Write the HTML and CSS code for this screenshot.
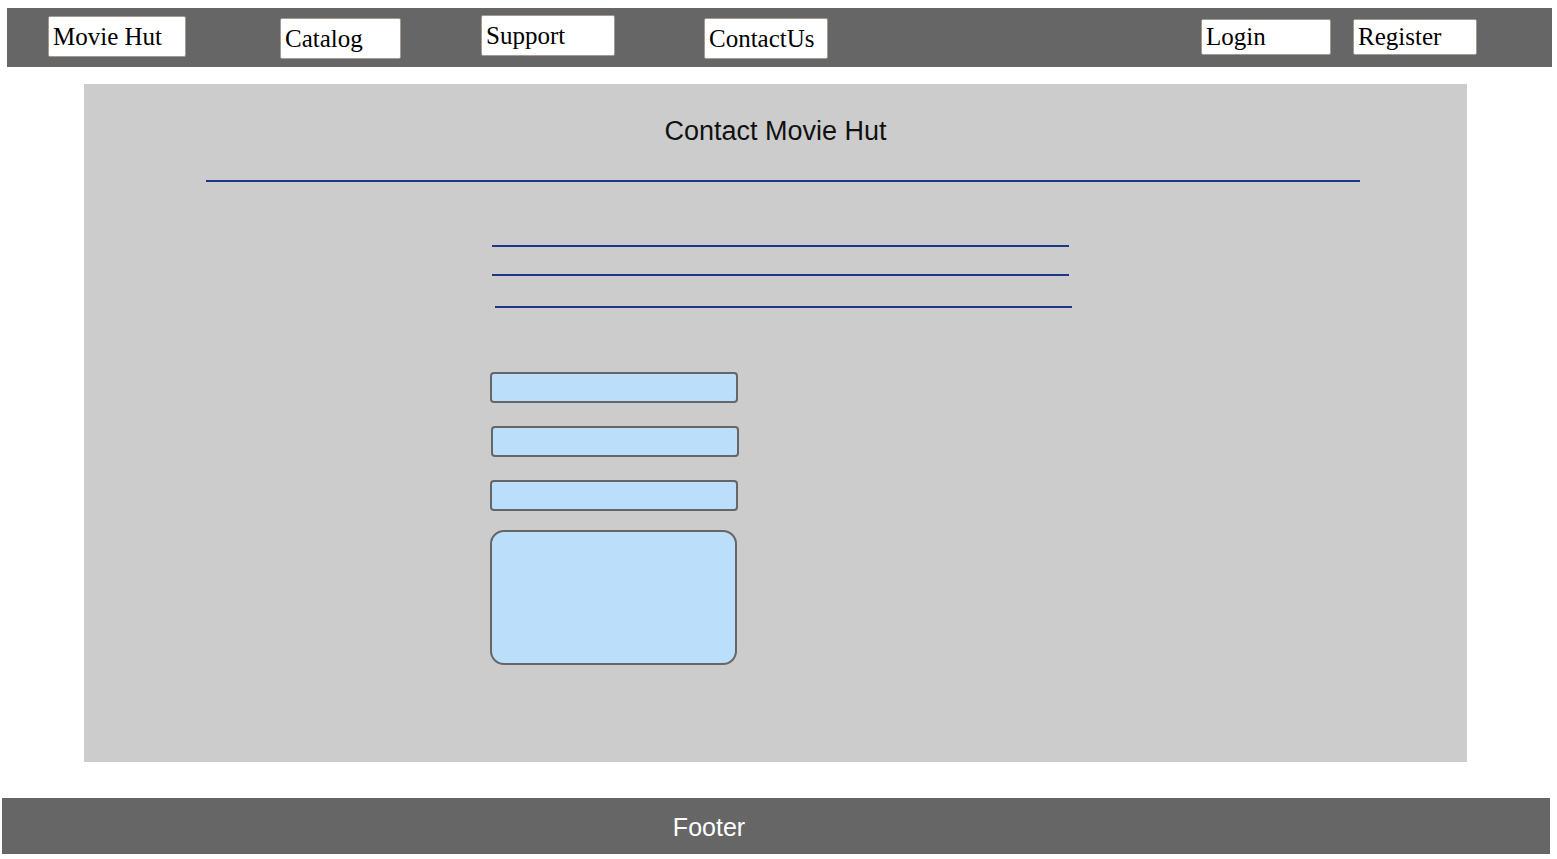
FILE: index.html
```html
<!DOCTYPE html>
<html>
<head>
<meta charset="utf-8">
<title>Contact Movie Hut</title>
<link rel="stylesheet" href="styles.css">
</head>
<body>
<header class="topbar">
  <div class="nav-btn nav-home">Movie Hut</div>
  <div class="nav-btn nav-catalog">Catalog</div>
  <div class="nav-btn nav-support">Support</div>
  <div class="nav-btn nav-contact">ContactUs</div>
  <div class="nav-btn nav-small nav-login">Login</div>
  <div class="nav-btn nav-small nav-register">Register</div>
</header>
<main class="panel">
  <h1 class="title">Contact Movie Hut</h1>
  <div class="rule rule-main"></div>
  <div class="rule rule-short rule-1"></div>
  <div class="rule rule-short rule-2"></div>
  <div class="rule rule-short rule-3"></div>
  <div class="field field-1"></div>
  <div class="field field-2"></div>
  <div class="field field-3"></div>
  <div class="field-area"></div>
</main>
<footer class="footer">Footer</footer>
</body>
</html>
```

FILE: styles.css
```css
html, body {
  margin: 0;
  padding: 0;
  background: #ffffff;
}

.topbar {
  display: flex;
  align-items: flex-start;
  margin: 8px 5px 0 7px;
  height: 59px;
  background: #666666;
}

.nav-btn {
  box-sizing: border-box;
  height: 41px;
  padding: 6px 3px 0 4px;
  background: #ffffff;
  border: 1px solid #a39a90;
  border-radius: 2px;
  font-family: "Liberation Serif", "Times New Roman", serif;
  font-size: 25px;
  line-height: 1.15;
  color: #000000;
  white-space: nowrap;
  overflow: hidden;
}

.nav-small {
  height: 36px;
  padding-top: 3px;
}

.nav-home { width: 138px; margin: 8px 0 0 41px; }
.nav-catalog { width: 121px; margin: 10px 0 0 94px; }
.nav-support { width: 134px; margin: 7px 0 0 80px; }
.nav-contact { width: 124px; margin: 10px 0 0 89px; }
.nav-login { width: 130px; margin: 11px 0 0 auto; }
.nav-register { width: 124px; margin: 11px 75px 0 22px; }

.panel {
  display: flex;
  flex-direction: column;
  align-items: flex-start;
  box-sizing: border-box;
  margin: 17px 0 0 84px;
  width: 1383px;
  height: 678px;
  padding-top: 32px;
  background: #cccccc;
}

.title {
  align-self: stretch;
  margin: 0;
  text-align: center;
  font-family: "Liberation Sans", Arial, sans-serif;
  font-weight: normal;
  font-size: 27px;
  line-height: 31px;
  color: #111111;
}

.rule {
  height: 2px;
  background: #1f3784;
}

.rule-main { width: 1154px; margin: 33px 0 0 122px; }
.rule-short { width: 577px; }
.rule-1 { margin: 63px 0 0 408px; }
.rule-2 { margin: 27px 0 0 408px; }
.rule-3 { margin: 30px 0 0 411px; }

.field {
  box-sizing: border-box;
  width: 248px;
  height: 31px;
  background: #bbdefb;
  border: 2px solid #666666;
  border-radius: 4px;
}

.field-1 { margin: 64px 0 0 406px; }
.field-2 { margin: 23px 0 0 407px; }
.field-3 { margin: 23px 0 0 406px; }

.field-area {
  box-sizing: border-box;
  width: 247px;
  height: 135px;
  margin: 19px 0 0 406px;
  background: #bbdefb;
  border: 2px solid #666666;
  border-radius: 14px;
}

.footer {
  box-sizing: border-box;
  margin: 36px 7px 0 2px;
  height: 56px;
  padding: 15px 134px 0 0;
  background: #666666;
  text-align: center;
  font-family: "Liberation Sans", Arial, sans-serif;
  font-size: 25px;
  line-height: 28px;
  color: #ffffff;
}
```
